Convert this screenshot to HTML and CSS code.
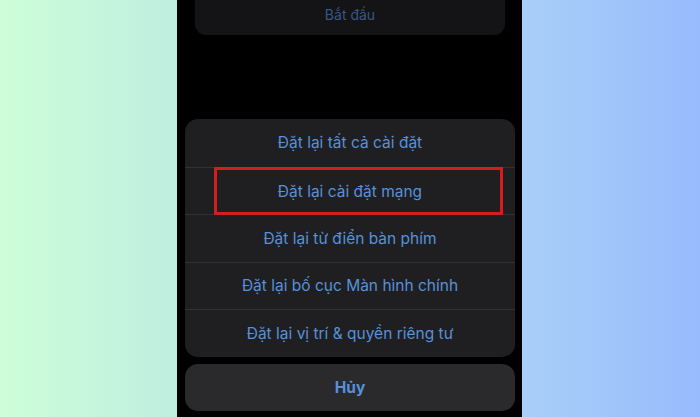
FILE: index.html
```html
<!DOCTYPE html>
<html lang="vi">
<head>
<meta charset="utf-8">
<link rel="stylesheet" href="styles.css">
</head>
<body>
<div class="page">
  <div class="side side-left"></div>
  <div class="phone">
    <div class="top-card"><span class="top-text">Bắt đầu</span></div>
    <div class="sheet">
      <div class="menu">
        <div class="row">Đặt lại tất cả cài đặt</div>
        <div class="row row-hl"><div class="hl">Đặt lại cài đặt mạng</div></div>
        <div class="row">Đặt lại từ điển bàn phím</div>
        <div class="row">Đặt lại bố cục Màn hình chính</div>
        <div class="row">Đặt lại vị trí &amp; quyền riêng tư</div>
      </div>
      <div class="cancel">Hủy</div>
    </div>
  </div>
  <div class="side side-right"></div>
</div>
</body>
</html>
```
FILE: styles.css
```css
html, body {
  margin: 0;
  padding: 0;
}
body {
  width: 700px;
  height: 417px;
  overflow: hidden;
  font-family: Inter, "Noto Sans", sans-serif;
}
.page {
  display: flex;
  width: 700px;
  height: 417px;
}
.side-left {
  width: 177px;
  background: linear-gradient(to right, #cdfed8, #c0eee0);
}
.side-right {
  width: 178px;
  background: linear-gradient(to right, #a9cff8, #97bbfc);
}
.phone {
  width: 345px;
  background: #000;
  display: flex;
  flex-direction: column;
  padding: 0 7px 0 8px;
  box-sizing: border-box;
}
.top-card {
  margin: 0 10px 0 10px;
  height: 35px;
  background: #141416;
  border-radius: 0 0 11px 11px;
  display: flex;
  justify-content: center;
  align-items: center;
}
.top-text {
  color: #34578a;
  font-size: 14px;
  margin-top: -6px;
}
.sheet {
  margin-top: 84px;
  display: flex;
  flex-direction: column;
  gap: 7px;
}
.menu {
  background: #1f1f21;
  border-radius: 13px;
  overflow: hidden;
}
.row {
  height: 47.5px;
  display: flex;
  align-items: center;
  justify-content: center;
  color: #5791da;
  font-size: 15.5px;
  border-top: 1px solid #323234;
  box-sizing: border-box;
}
.row:first-child {
  border-top: none;
}
.row-hl {
  padding: 0 12px 0 29px;
}
.hl {
  flex: 1;
  height: 48px;
  border: 3px solid #d41d1d;
  box-sizing: border-box;
  display: flex;
  align-items: center;
  justify-content: center;
  padding-right: 17px;
  margin-top: 1px;
}
.cancel {
  height: 47px;
  background: #2a2a2c;
  border-radius: 13px;
  display: flex;
  align-items: center;
  justify-content: center;
  color: #5791da;
  font-size: 15.5px;
  font-weight: 700;
}
```
